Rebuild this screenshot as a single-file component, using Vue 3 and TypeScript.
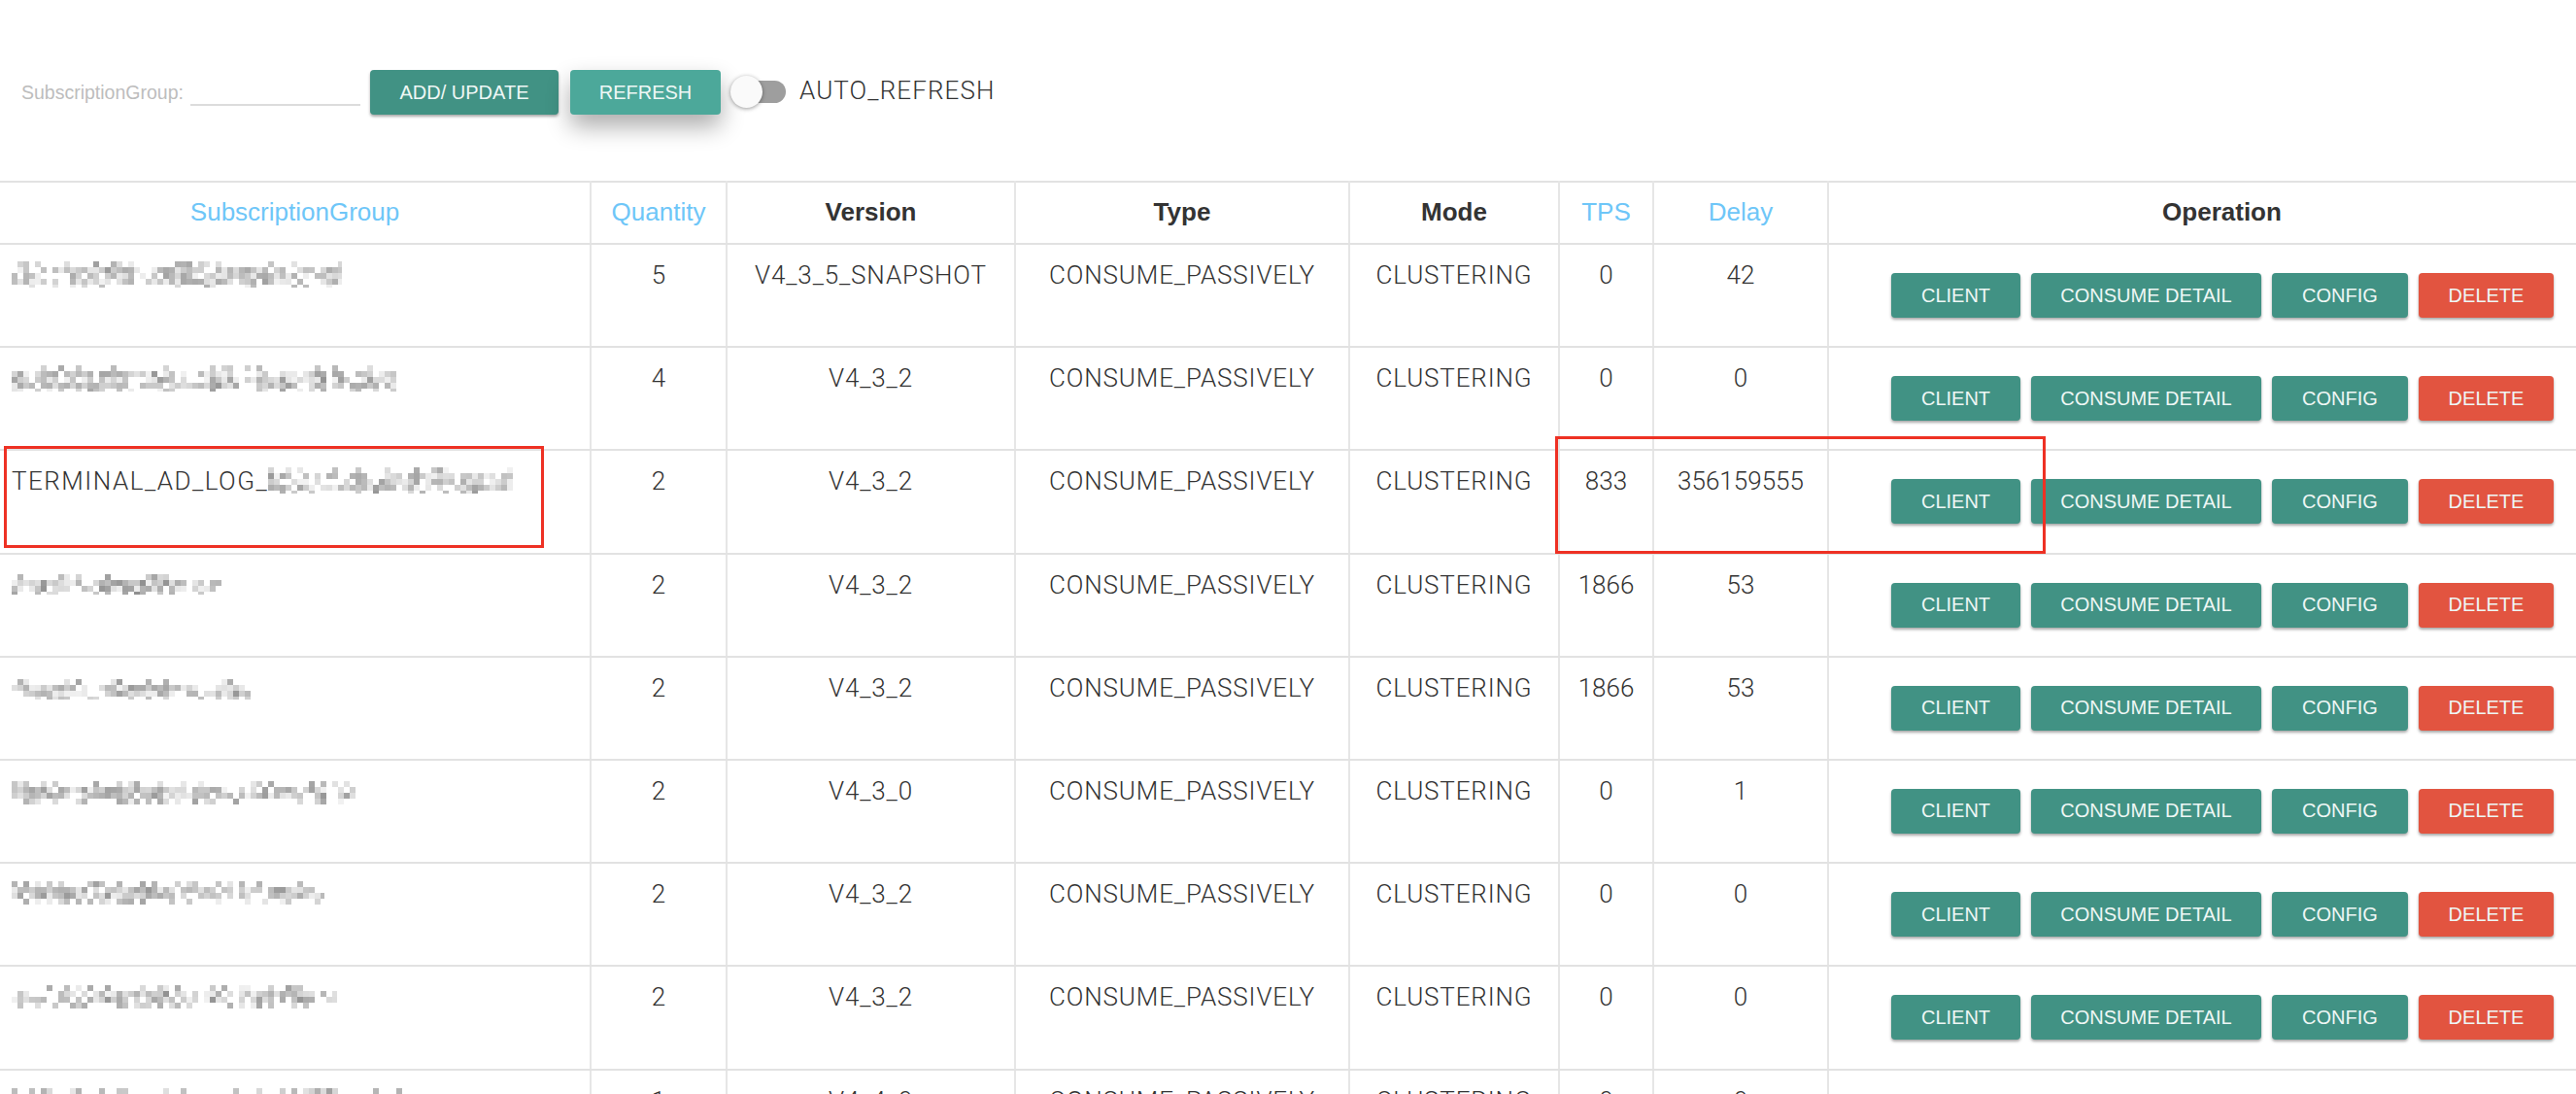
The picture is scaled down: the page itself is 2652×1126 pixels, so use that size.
<script setup lang="ts">
import { computed } from 'vue'

interface Row {
  prefix: string
  blurW: number
  blurY: number
  blurH: number
  seed: number
  quantity: number
  version: string
  tps: number
  delay: number
  buttons: boolean
}

const rows: Row[] = [
  { prefix: '', blurW: 340, blurY: 2, blurH: 27, seed: 11, quantity: 5, version: 'V4_3_5_SNAPSHOT', tps: 0, delay: 42, buttons: true },
  { prefix: '', blurW: 396, blurY: 3, blurH: 27, seed: 23, quantity: 4, version: 'V4_3_2', tps: 0, delay: 0, buttons: true },
  { prefix: 'TERMINAL_AD_LOG_', blurW: 254, blurY: 2, blurH: 27, seed: 37, quantity: 2, version: 'V4_3_2', tps: 833, delay: 356159555, buttons: true },
  { prefix: '', blurW: 216, blurY: 5, blurH: 21, seed: 41, quantity: 2, version: 'V4_3_2', tps: 1866, delay: 53, buttons: true },
  { prefix: '', blurW: 246, blurY: 7, blurH: 21, seed: 53, quantity: 2, version: 'V4_3_2', tps: 1866, delay: 53, buttons: true },
  { prefix: '', blurW: 354, blurY: 6, blurH: 24, seed: 67, quantity: 2, version: 'V4_3_0', tps: 0, delay: 1, buttons: true },
  { prefix: '', blurW: 322, blurY: 3, blurH: 24, seed: 71, quantity: 2, version: 'V4_3_2', tps: 0, delay: 0, buttons: true },
  { prefix: '', blurW: 335, blurY: 4, blurH: 24, seed: 83, quantity: 2, version: 'V4_3_2', tps: 0, delay: 0, buttons: true },
  { prefix: '', blurW: 408, blurY: 3, blurH: 24, seed: 97, quantity: 1, version: 'V4_4_0', tps: 0, delay: 0, buttons: false }
]

const CELL = 6

function mosaic(r: Row) {
  let s = r.seed * 7919
  const next = () => {
    s = (s * 1103515245 + 12345) & 0x7fffffff
    return s / 0x7fffffff
  }
  const cells: { x: number; y: number; o: number }[] = []
  const cols = Math.round(r.blurW / CELL)
  const lines = Math.round(r.blurH / CELL)
  let colWeight = 1
  for (let c = 0; c < cols; c++) {
    if (c % 3 === 0) colWeight = 0.6 + next() * 0.5
    for (let l = 0; l < lines; l++) {
      const band = l === 0 || l === lines - 1 ? 0.35 : 0.9
      if (next() < band * colWeight) {
        cells.push({ x: c * CELL, y: l * CELL, o: 0.07 + next() * 0.48 * colWeight })
      }
    }
  }
  return cells
}

const table = computed(() => rows.map((r) => ({ ...r, cells: mosaic(r) })))
</script>

<template>
  <div class="page">
    <div class="toolbar">
      <span class="field-label">SubscriptionGroup:</span>
      <span class="field-input"></span>
      <button class="btn btn-teal tool-btn add">ADD/ UPDATE</button>
      <button class="btn btn-light tool-btn refresh">REFRESH</button>
      <span class="switch"><span class="thumb"></span></span>
      <span class="auto">AUTO_REFRESH</span>
    </div>
    <table class="grid">
      <colgroup>
        <col class="c1" /><col class="c2" /><col class="c3" /><col class="c4" />
        <col class="c5" /><col class="c6" /><col class="c7" /><col class="c8" />
      </colgroup>
      <thead>
        <tr>
          <th class="sort">SubscriptionGroup</th>
          <th class="sort">Quantity</th>
          <th>Version</th>
          <th>Type</th>
          <th>Mode</th>
          <th class="sort">TPS</th>
          <th class="sort">Delay</th>
          <th class="op-head">Operation</th>
        </tr>
      </thead>
      <tbody>
        <tr v-for="(r, i) in table" :key="i">
          <td class="name">
            <span class="name-wrap">
              <span v-if="r.prefix" class="prefix">{{ r.prefix }}</span>
              <svg class="mosaic" :width="r.blurW" :height="r.blurH" :style="{ marginTop: r.blurY + 'px' }">
                <rect v-for="(c, j) in r.cells" :key="j" :x="c.x" :y="c.y" width="6" height="6" fill="#444" :fill-opacity="c.o" />
              </svg>
            </span>
          </td>
          <td>{{ r.quantity }}</td>
          <td class="caps">{{ r.version }}</td>
          <td class="caps">CONSUME_PASSIVELY</td>
          <td class="caps">CLUSTERING</td>
          <td>{{ r.tps }}</td>
          <td>{{ r.delay }}</td>
          <td class="ops">
            <div v-if="r.buttons" class="actions">
              <button class="btn btn-teal b-client">CLIENT</button>
              <button class="btn btn-teal b-detail">CONSUME DETAIL</button>
              <button class="btn btn-teal b-config">CONFIG</button>
              <button class="btn btn-red b-delete">DELETE</button>
            </div>
          </td>
        </tr>
      </tbody>
    </table>
    <div class="mark mark-a"></div>
    <div class="mark mark-b"></div>
  </div>
</template>

<style>
html, body { margin: 0; background: #fff; overflow: hidden; }
</style>

<style scoped>
.page {
  position: relative;
  width: 2652px;
  height: 1126px;
  overflow: hidden;
  font-family: "Liberation Sans", Arial, sans-serif;
  color: #4a4a4a;
}
.toolbar {
  display: flex;
  align-items: center;
  height: 186px;
  box-sizing: border-box;
  padding: 0 0 0 22px;
}
.field-label {
  font-size: 19.5px;
  color: #bdbdbd;
  width: 174px;
  padding-top: 4px;
}
.field-input {
  width: 175px;
  height: 2px;
  background: #dcdcdc;
  margin-top: 30px;
}
.btn {
  border: 0;
  border-radius: 4px;
  height: 46px;
  padding: 0;
  color: #eef7f5;
  font-family: "Liberation Sans", Arial, sans-serif;
  font-weight: 400;
  font-size: 20px;
  box-sizing: border-box;
  white-space: nowrap;
}
.btn-teal {
  background: #419284;
  box-shadow: 0 2px 3px rgba(0, 0, 0, 0.35);
}
.btn-light {
  background: #4ca89a;
  box-shadow: 0 12px 24px rgba(0, 0, 0, 0.33);
}
.btn-red {
  background: #e25440;
  box-shadow: 0 2px 3px rgba(0, 0, 0, 0.35);
}
.tool-btn { margin-top: 4px; }
.add { width: 194px; margin-left: 10px; }
.refresh { width: 155px; margin-left: 12px; }
.switch {
  position: relative;
  display: block;
  width: 39px;
  height: 23px;
  border-radius: 12px;
  background: #9e9e9e;
  margin-left: 28px;
  margin-top: 3px;
}
.thumb {
  position: absolute;
  left: -18px;
  top: -5px;
  width: 33px;
  height: 33px;
  border-radius: 50%;
  background: #fafafa;
  box-shadow: 0 1px 4px rgba(0, 0, 0, 0.4);
}
.auto {
  font-family: Roboto, "Liberation Sans", sans-serif;
  font-weight: 300;
  font-size: 26px;
  letter-spacing: 1.1px;
  color: #333;
  margin-left: 14px;
}
.grid {
  table-layout: fixed;
  width: 2652px;
  border-collapse: collapse;
  border-top: 2px solid #e2e2e2;
}
.c1 { width: 608px; }
.c2 { width: 140px; }
.c3 { width: 297px; }
.c4 { width: 344px; }
.c5 { width: 216px; }
.c6 { width: 97px; }
.c7 { width: 180px; }
.c8 { width: 770px; }
th {
  height: 64px;
  padding: 0 0 2px;
  box-sizing: border-box;
  font-size: 26px;
  font-weight: 700;
  color: #333;
  border-left: 2px solid #e6e6e6;
  border-bottom: 2px solid #e2e2e2;
  text-align: center;
}
th:first-child, td:first-child { border-left: 0; }
th.sort { color: #6ec6f8; font-weight: 400; }
th.op-head { padding-left: 40px; }
tbody tr { height: 106.2px; }
td {
  box-sizing: border-box;
  padding: 15px 0 0;
  font-family: Roboto, "Liberation Sans", sans-serif;
  font-weight: 300;
  font-size: 26px;
  line-height: 32px;
  color: #333;
  text-align: center;
  vertical-align: top;
  border-left: 2px solid #e6e6e6;
  border-bottom: 2px solid #e2e2e2;
  white-space: nowrap;
}
td.caps { letter-spacing: 0.85px; }
td.name { text-align: left; padding-left: 12px; }
.prefix { letter-spacing: 1.5px; }
.name-wrap { display: flex; align-items: flex-start; height: 32px; }
.mosaic { display: block; filter: blur(0.5px); flex: none; }
td.ops { padding: 29px 23px 0 0; }
.actions { display: flex; justify-content: flex-end; gap: 11px; }
.b-client { width: 133px; }
.b-detail { width: 237px; }
.b-config { width: 140px; }
.b-delete { width: 139px; }
.mark {
  position: absolute;
  border: 3px solid #ee3124;
  box-sizing: border-box;
  pointer-events: none;
}
.mark-a { left: 4px; top: 459px; width: 556px; height: 105px; }
.mark-b { left: 1601px; top: 449px; width: 505px; height: 121px; }
</style>
